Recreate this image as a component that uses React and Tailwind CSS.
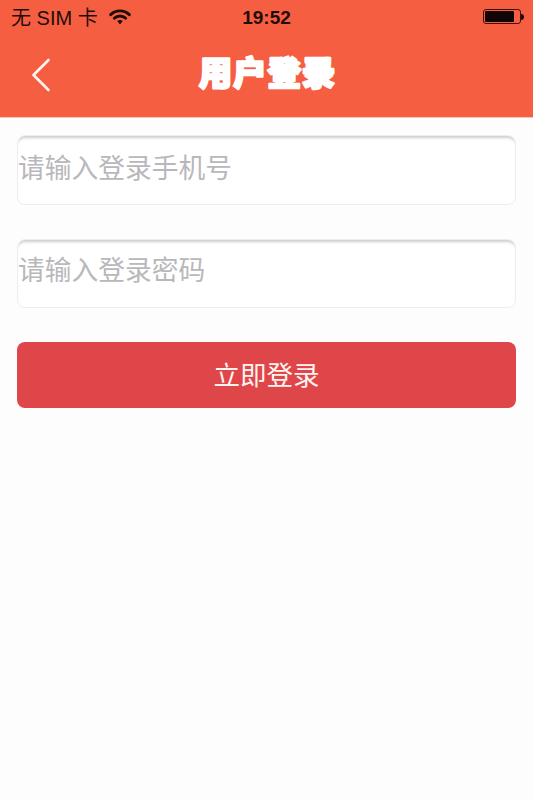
import React from 'react';
import { ChevronLeft } from 'lucide-react';

const cjk = "font-['Liberation_Sans','Noto_Sans_CJK_SC',sans-serif]";

const StatusBar = () => {
  return (
    <div className={`flex h-[38px] items-start justify-between pl-[11px] pr-[9px] pt-[6px] text-[#1f0d0a] ${cjk}`}>
      <div className="flex w-[140px] items-center">
        <span className="text-[20px] leading-[24px] whitespace-nowrap">无 SIM 卡</span>
        <svg className="ml-[11px] mt-[-4px] shrink-0" width="22" height="17" viewBox="0 0 21 16" fill="none">
          <path d="M1.6 6.2C6.6 1.4 14.4 1.4 19.4 6.2" stroke="#1f0d0a" strokeWidth="2.8" strokeLinecap="round" />
          <path d="M5.2 9.6C8.2 6.9 12.8 6.9 15.8 9.6" stroke="#1f0d0a" strokeWidth="2.8" strokeLinecap="round" />
          <path d="M7.8 12.4C9.6 11 11.4 11 13.2 12.4L10.5 15.6Z" fill="#1f0d0a" />
        </svg>
      </div>
      <span className="text-[19px] leading-[24px] font-bold">19:52</span>
      <div className="flex w-[142px] items-center justify-end pt-[3px]">
        <div className="flex h-[15px] w-[38px] items-center rounded-[3px] border border-[#3a120c] p-[1px]">
          <div className="h-full w-[29px] rounded-[1px] bg-[#120505]"></div>
        </div>
        <div className="h-[6px] w-[3px] rounded-r-sm bg-[#1f0d0a]"></div>
      </div>
    </div>
  );
};

const Field = ({ placeholder, boxHeight, inputHeight }) => {
  return (
    <div className={`${boxHeight} overflow-hidden rounded-[8px] border border-[#efedf1] bg-white shadow-[inset_0_4px_3px_-2px_#cfccd3]`}>
      <input
        placeholder={placeholder}
        className={`${inputHeight} w-full bg-transparent text-[26.75px] outline-none placeholder:text-[#b9b7bb] ${cjk}`}
      />
    </div>
  );
};

const App = () => {
  return (
    <div className="min-h-[800px] w-[533px] bg-[#fefdfe]">
      <header className="h-[118px] border-b border-[#f9c4b6] bg-[#f65e42]">
        <StatusBar />
        <div className="relative flex h-[79px] items-center justify-center">
          <ChevronLeft className="absolute left-[11px] top-[7px] text-[#fff6ee]" size={60} strokeWidth={2.6} absoluteStrokeWidth />
          <svg className="mb-[10px]" width="156" height="56" viewBox="0 0 156 56">
            <text
              x="78"
              y="39.5"
              textAnchor="middle"
              textLength="136"
              fontFamily="'Noto Sans CJK SC', sans-serif"
              fontSize="33"
              fontWeight="900"
              fill="white"
              stroke="white"
              strokeWidth="2.6"
              strokeLinejoin="round"
            >
              用户登录
            </text>
          </svg>
        </div>
      </header>

      <main className="flex flex-col px-[17px] pt-[17px]">
        <Field placeholder="请输入登录手机号" boxHeight="h-[70px]" inputHeight="h-[66px]" />
        <div className="mt-[34px]">
          <Field placeholder="请输入登录密码" boxHeight="h-[69px]" inputHeight="h-[62px]" />
        </div>
        <button className={`mt-[34px] h-[66px] rounded-[8px] bg-[#de464a] pt-[3px] text-[26.5px] text-[#fff3f0] ${cjk}`}>
          立即登录
        </button>
      </main>
    </div>
  );
};

export default App;
